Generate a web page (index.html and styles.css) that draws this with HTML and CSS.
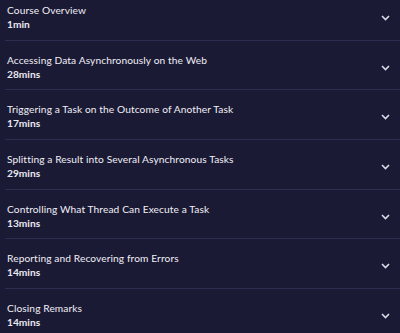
FILE: index.html
```html
<!DOCTYPE html>
<html lang="en">
<head>
    <meta charset="UTF-8">
    <meta name="viewport" content="width=device-width, initial-scale=1.0">
    <title>Course Contents</title>
    <link rel="stylesheet" href="styles.css">
</head>
<body>
    <ul class="module-list">
        <li class="module">
            <div class="module-text">
                <div class="module-title">Course Overview</div>
                <div class="module-time">1min</div>
            </div>
            <svg class="chevron" width="9" height="6" viewBox="0 0 9 6"><path d="M1 1 L4.5 4.5 L8 1"/></svg>
        </li>
        <li class="module">
            <div class="module-text">
                <div class="module-title">Accessing Data Asynchronously on the Web</div>
                <div class="module-time">28mins</div>
            </div>
            <svg class="chevron" width="9" height="6" viewBox="0 0 9 6"><path d="M1 1 L4.5 4.5 L8 1"/></svg>
        </li>
        <li class="module">
            <div class="module-text">
                <div class="module-title">Triggering a Task on the Outcome of Another Task</div>
                <div class="module-time">17mins</div>
            </div>
            <svg class="chevron" width="9" height="6" viewBox="0 0 9 6"><path d="M1 1 L4.5 4.5 L8 1"/></svg>
        </li>
        <li class="module">
            <div class="module-text">
                <div class="module-title">Splitting a Result into Several Asynchronous Tasks</div>
                <div class="module-time">29mins</div>
            </div>
            <svg class="chevron" width="9" height="6" viewBox="0 0 9 6"><path d="M1 1 L4.5 4.5 L8 1"/></svg>
        </li>
        <li class="module">
            <div class="module-text">
                <div class="module-title">Controlling What Thread Can Execute a Task</div>
                <div class="module-time">13mins</div>
            </div>
            <svg class="chevron" width="9" height="6" viewBox="0 0 9 6"><path d="M1 1 L4.5 4.5 L8 1"/></svg>
        </li>
        <li class="module">
            <div class="module-text">
                <div class="module-title">Reporting and Recovering from Errors</div>
                <div class="module-time">14mins</div>
            </div>
            <svg class="chevron" width="9" height="6" viewBox="0 0 9 6"><path d="M1 1 L4.5 4.5 L8 1"/></svg>
        </li>
        <li class="module">
            <div class="module-text">
                <div class="module-title">Closing Remarks</div>
                <div class="module-time">14mins</div>
            </div>
            <svg class="chevron" width="9" height="6" viewBox="0 0 9 6"><path d="M1 1 L4.5 4.5 L8 1"/></svg>
        </li>
    </ul>
</body>
</html>
```
FILE: styles.css
```css
body {
    margin: 0;
    padding: 0;
    background: #1b1a34;
    font-family: 'Lato', 'Noto Sans', sans-serif;
    color: #e9e8f1;
    overflow: hidden;
}
.module-list {
    list-style: none;
    margin: -9px 0 0 5px;
    padding: 0;
}
.module {
    display: flex;
    align-items: center;
    justify-content: space-between;
    height: 48.7px;
    padding: 0 10px 0 2px;
    border-bottom: 1px solid #2e2d4f;
}
.module-text {
    padding-top: 3px;
}
.module-title {
    font-size: 10.2px;
    line-height: 14px;
    letter-spacing: 0.1px;
    color: #f0eff6;
}
.module-time {
    font-size: 10.2px;
    font-weight: bold;
    line-height: 14px;
}
.chevron {
    margin-top: 5px;
    fill: none;
    stroke: #dcdbe8;
    stroke-width: 1.6;
}
```
